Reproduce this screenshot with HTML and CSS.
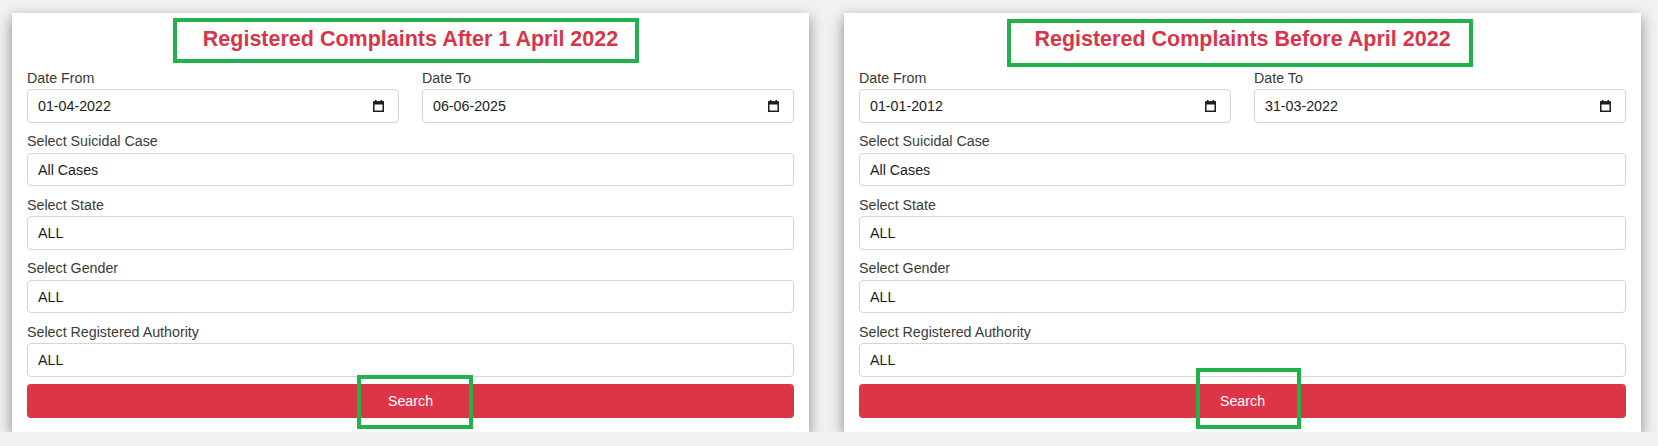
FILE: index.html
```html
<!DOCTYPE html>
<html lang="en">
<head>
<meta charset="utf-8">
<title>Registered Complaints</title>
<link rel="stylesheet" href="styles.css">
</head>
<body>
<div class="page">
  <section class="card">
    <h2 class="title">Registered Complaints After 1 April 2022</h2>
    <form class="form">
      <div class="row">
        <div class="field">
          <label>Date From</label>
          <div class="control"><span>01-04-2022</span><svg class="cal" viewBox="0 0 11 12" width="11" height="12"><rect x="2" y="0" width="1.6" height="2.5"/><rect x="7.4" y="0" width="1.6" height="2.5"/><rect x="0" y="1.5" width="11" height="3"/><rect x="0.75" y="2" width="9.5" height="9.25" fill="none" stroke="#1d1d1d" stroke-width="1.5"/></svg></div>
        </div>
        <div class="field">
          <label>Date To</label>
          <div class="control"><span>06-06-2025</span><svg class="cal" viewBox="0 0 11 12" width="11" height="12"><rect x="2" y="0" width="1.6" height="2.5"/><rect x="7.4" y="0" width="1.6" height="2.5"/><rect x="0" y="1.5" width="11" height="3"/><rect x="0.75" y="2" width="9.5" height="9.25" fill="none" stroke="#1d1d1d" stroke-width="1.5"/></svg></div>
        </div>
      </div>
      <div class="field">
        <label>Select Suicidal Case</label>
        <div class="control"><span>All Cases</span></div>
      </div>
      <div class="field">
        <label>Select State</label>
        <div class="control"><span>ALL</span></div>
      </div>
      <div class="field">
        <label>Select Gender</label>
        <div class="control"><span>ALL</span></div>
      </div>
      <div class="field">
        <label>Select Registered Authority</label>
        <div class="control"><span>ALL</span></div>
      </div>
      <button type="button" class="btn">Search</button>
    </form>
    <div class="mark mark-title-a"></div>
    <div class="mark mark-search-a"></div>
  </section>

  <section class="card">
    <h2 class="title">Registered Complaints Before April 2022</h2>
    <form class="form">
      <div class="row">
        <div class="field">
          <label>Date From</label>
          <div class="control"><span>01-01-2012</span><svg class="cal" viewBox="0 0 11 12" width="11" height="12"><rect x="2" y="0" width="1.6" height="2.5"/><rect x="7.4" y="0" width="1.6" height="2.5"/><rect x="0" y="1.5" width="11" height="3"/><rect x="0.75" y="2" width="9.5" height="9.25" fill="none" stroke="#1d1d1d" stroke-width="1.5"/></svg></div>
        </div>
        <div class="field">
          <label>Date To</label>
          <div class="control"><span>31-03-2022</span><svg class="cal" viewBox="0 0 11 12" width="11" height="12"><rect x="2" y="0" width="1.6" height="2.5"/><rect x="7.4" y="0" width="1.6" height="2.5"/><rect x="0" y="1.5" width="11" height="3"/><rect x="0.75" y="2" width="9.5" height="9.25" fill="none" stroke="#1d1d1d" stroke-width="1.5"/></svg></div>
        </div>
      </div>
      <div class="field">
        <label>Select Suicidal Case</label>
        <div class="control"><span>All Cases</span></div>
      </div>
      <div class="field">
        <label>Select State</label>
        <div class="control"><span>ALL</span></div>
      </div>
      <div class="field">
        <label>Select Gender</label>
        <div class="control"><span>ALL</span></div>
      </div>
      <div class="field">
        <label>Select Registered Authority</label>
        <div class="control"><span>ALL</span></div>
      </div>
      <button type="button" class="btn">Search</button>
    </form>
    <div class="mark mark-title-b"></div>
    <div class="mark mark-search-b"></div>
  </section>
</div>
</body>
</html>
```

FILE: styles.css
```css
html, body {
  margin: 0;
  background: #f1f1f1;
  font-family: "Liberation Sans", Arial, sans-serif;
}

.page {
  display: flex;
  gap: 35px;
  padding: 13px 0 0 12px;
}

.card {
  position: relative;
  width: 797px;
  flex: 0 0 797px;
  box-sizing: border-box;
  background: #fff;
  padding: 13.25px 15px 14.4px;
  box-shadow: 0 5px 13px rgba(0, 0, 0, 0.45);
}

.title {
  margin: 0 0 15.5px;
  text-align: center;
  font-size: 21.5px;
  line-height: 26px;
  font-weight: bold;
  color: #d6364a;
}

.form {
  display: flex;
  flex-direction: column;
  gap: 8.5px;
  margin: 0;
}

.row {
  display: grid;
  grid-template-columns: 1fr 1fr;
  gap: 23px;
}

.field label {
  display: block;
  font-size: 14.25px;
  line-height: 20px;
  margin-bottom: 1.5px;
  color: #3a3a3a;
}

.control {
  height: 33.5px;
  box-sizing: border-box;
  border: 1px solid #d3d6d9;
  border-radius: 4px;
  padding: 0 14px 0 10px;
  display: flex;
  align-items: center;
  justify-content: space-between;
  font-size: 14.25px;
  color: #1c1c1c;
  background: #fff;
}

.cal {
  fill: #1d1d1d;
  display: block;
}

.btn {
  margin-top: -1px;
  height: 33.6px;
  width: 100%;
  border: 0;
  border-radius: 4px;
  background: #dc3545;
  color: #fff;
  font-family: "Liberation Sans", Arial, sans-serif;
  font-size: 14.25px;
  cursor: pointer;
}

.mark {
  position: absolute;
  box-sizing: border-box;
  border: 4.5px solid #22b14c;
  pointer-events: none;
}

.mark-title-a {
  left: 161.3px;
  top: 5.3px;
  width: 465.4px;
  height: 45px;
}

.mark-search-a {
  left: 345.3px;
  top: 362.3px;
  width: 115.4px;
  height: 54px;
}

.mark-title-b {
  left: 163.3px;
  top: 6px;
  width: 465.4px;
  height: 47.7px;
}

.mark-search-b {
  left: 352px;
  top: 355.3px;
  width: 104.7px;
  height: 61px;
}
```
